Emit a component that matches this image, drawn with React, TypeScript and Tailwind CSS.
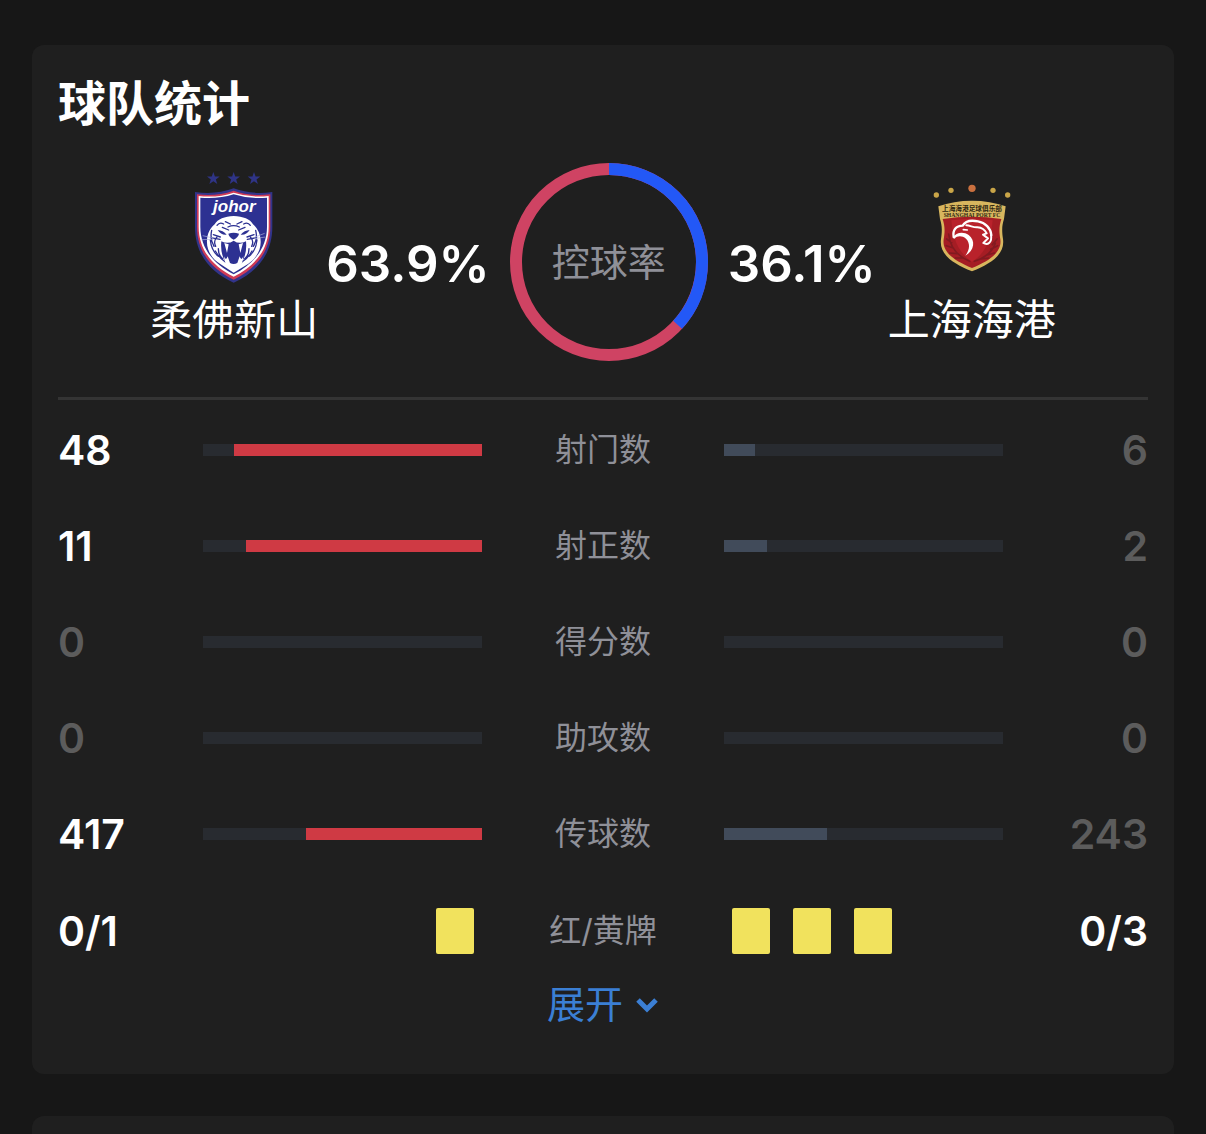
import { useState } from "react"

interface Stat {
    label: string
    home: number
    away: number
}

const stats: Stat[] = [
    { label: "射门数", home: 48, away: 6 },
    { label: "射正数", home: 11, away: 2 },
    { label: "得分数", home: 0, away: 0 },
    { label: "助攻数", home: 0, away: 0 },
    { label: "传球数", home: 417, away: 243 },
]

const possession = { home: 63.9, away: 36.1, arc: 36.8 }
const cards = { home: { red: 0, yellow: 1 }, away: { red: 0, yellow: 3 } }

const STAR = "M0-20 4.7-6.5 19-6.2 7.6 2.5 11.8 16.2 0 8-11.8 16.2-7.6 2.5-19-6.2-4.7-6.5Z"

const JohorCrest = () => (
    <svg viewBox="0 0 300 375" className="w-[100px] h-[125px]" role="img" aria-label="柔佛新山">
        <g fill="#2f3486">
            <path d={STAR} transform="translate(88 41)" />
            <path d={STAR} transform="translate(149 41)" />
            <path d={STAR} transform="translate(210 41)" />
        </g>
        {/* Shield */}
        <path d="M33 81Q95 90 149 70Q203 90 265 81V185C265 265 222 320 149 353C76 320 33 265 33 185Z" fill="#32348a" />
        <path d="M39 88Q98 95 149 77Q200 95 259 88V185C259 258 218 311 149 344C80 311 39 258 39 185Z" fill="#cf3a56" />
        <path d="M44 93Q100 99 149 83Q198 99 254 93V185C254 254 213 303 149 335C85 303 44 254 44 185Z" fill="#fff" />
        <path d="M49 98Q102 103 149 88Q196 103 249 98V185C249 249 209 297 149 328C89 297 49 249 49 185Z" fill="#2d3192" />
        <text x="151" y="142" textAnchor="middle" fill="#fff" fontSize="51" fontWeight="700" fontStyle="italic" fontFamily="Liberation Sans, sans-serif">johor</text>
        {/* Tiger */}
        <path d="M92 178C101 162 122 154 149 153C177 154 199 162 207 178C221 190 230 208 230 229C231 255 216 281 192 297L149 323L110 298C82 281 67 253 69 226C70 206 78 190 92 178Z" fill="#fff" />
        <g fill="none" stroke="#2d3192" strokeWidth="4" strokeLinecap="round">
            <path d="M99 181Q107 170 119 177M199 181Q191 170 179 177M124 170L139 177M174 170L159 177M132 186Q149 178 166 186M115 187L134 195M183 187L164 195" />
            <path d="M83 196Q77 223 90 244M79 225Q82 257 103 274M99 216Q87 228 95 244M215 196Q222 223 208 244M219 225Q216 257 195 274M199 216Q211 228 203 244" />
            <path d="M88 209L109 216M80 218L108 223M210 209L189 216M218 218L190 223M94 258Q108 281 124 291M204 258Q191 281 174 291M103 251Q103 271 116 281M195 251Q195 271 182 281" />
        </g>
        <path d="M101 195Q117 196 128 209Q111 211 101 195ZM197 195Q181 196 170 209Q187 211 197 195Z" fill="#2d3192" />
        <path d="M133 206Q149 201 165 206Q163 217 149 224Q135 217 133 206Z" fill="#2d3192" />
        <path d="M112 229Q132 239 149 227Q166 239 186 229Q190 268 171 296Q149 312 127 296Q108 268 112 229Z" fill="#2d3192" />
        <path d="M121 234L134 238L129 264ZM177 234L164 238L169 264ZM120 274Q126 290 131 274L138 294Q149 300 160 294L167 274Q172 290 178 274Q177 298 163 306H135Q121 298 120 274Z" fill="#fff" />
        <path d="M56 212L87 219M52 224L88 223M242 205L211 217M244 216L211 221" stroke="#aeb2dd" strokeWidth="2" />
    </svg>
)

const ShanghaiCrest = () => (
    <svg viewBox="0 -30 300 375" className="w-[100px] h-[125px]" role="img" aria-label="上海海港">
        <circle cx="150" cy="40" r="11" fill="#c9703f" />
        <g fill="#c9a548">
            <circle cx="87" cy="46" r="8" />
            <circle cx="213" cy="46" r="8" />
            <circle cx="43" cy="60" r="8" />
            <circle cx="257" cy="60" r="8" />
        </g>
        {/* Shield */}
        <path d="M49 94Q95 77 150 77Q205 77 251 94L246 132C240 151 239 165 243 192C249 237 211 264 150 289C89 264 51 237 57 192C61 165 60 151 54 132Z" fill="#d8b65e" />
        <path d="M62 132Q150 119 238 132C231 153 231 169 235 193C240 230 206 256 150 279C94 256 60 230 65 193C69 169 69 153 62 132Z" fill="#a51d24" />
        <path d="M88 136Q150 126 212 136C208 174 200 231 150 260C101 231 92 174 88 136Z" fill="#b9222b" />
        <g fill="none" stroke="#811a20" strokeWidth="5" strokeLinecap="round">
            <path d="M80 177Q86 235 143 259M220 205Q208 242 157 259M74 192L89 203M73 212L94 219M83 234L105 236M100 249L123 249M225 192L211 209M227 212L206 223M217 234L195 240M200 249L177 252" />
        </g>
        <text x="150" y="107" textAnchor="middle" fill="#302712" fontSize="20" fontWeight="700" fontFamily="Noto Sans CJK SC, sans-serif">上海海港足球俱乐部</text>
        <text x="150" y="125" textAnchor="middle" fill="#302712" fontSize="17" fontWeight="700" fontFamily="Liberation Serif, serif">SHANGHAI PORT FC</text>
        {/* Eagle head */}
        <g fill="none" stroke="#fff" strokeLinecap="round" strokeLinejoin="round">
            <path d="M95 186C91 166 102 152 122 152C130 137 148 135 168 139C190 143 206 160 208 180" strokeWidth="7" />
            <path d="M133 151C145 151 153 158 166 157C180 158 190 167 194 175L183 179L198 190L184 204C197 212 211 202 207 180" strokeWidth="6" />
            <path d="M124 164L136 165" strokeWidth="5" />
        </g>
        <path d="M93 188C101 172 124 168 140 180C161 196 158 226 130 242C145 222 144 203 132 191C120 181 105 182 98 191Z" fill="#fff" />
    </svg>
)

const PossessionRing = () => (
    <div className="relative w-[198px] h-[198px] shrink-0 grid place-items-center">
        <svg viewBox="0 0 198 198" className="absolute inset-0 -rotate-90" aria-hidden="true">
            <circle cx="99" cy="99" r="93" fill="none" stroke="#cf4363" strokeWidth="12" />
            <circle
                cx="99"
                cy="99"
                r="93"
                fill="none"
                stroke="#2358f6"
                strokeWidth="12"
                pathLength="100"
                strokeDasharray={`${possession.arc} 100`}
            />
        </svg>
        <span className="text-[38px] leading-12 text-[#8f9098]">控球率</span>
    </div>
)

const StatRow = ({ label, home, away }: Stat) => {
    const total = home + away
    const share = (value: number) => (total ? `${(value / total) * 100}%` : "0%")

    return (
        <li className="grid grid-cols-[145px_1fr_242px_1fr_145px] items-center h-24">
            <span className={`text-[41px] leading-12 font-semibold ${home > away ? "text-white" : "text-[#5c5c5c]"}`}>{home}</span>
            <div className="flex justify-end h-3 bg-[#282b30]">
                <div className="bg-[#cf3a44]" style={{ width: share(home) }} />
            </div>
            <span className="text-[32px] leading-12 text-center text-[#8f9098]">{label}</span>
            <div className="flex h-3 bg-[#282b30]">
                <div className="bg-[#414b5a]" style={{ width: share(away) }} />
            </div>
            <span className={`text-[41px] leading-12 font-semibold text-right ${away > home ? "text-white" : "text-[#5c5c5c]"}`}>{away}</span>
        </li>
    )
}

const YellowCards = ({ count }: { count: number }) => (
    <>
        {Array.from({ length: count }, (_, i) => (
            <span key={i} className="w-[38px] h-[46px] rounded-xs bg-[#f1e25d]" />
        ))}
    </>
)

export default function App() {
    const [expanded, setExpanded] = useState(false)

    return (
        <main className="min-h-screen flex flex-col gap-[42px] bg-[#171717] px-8 pt-[45px] font-[Inter,'Noto_Sans_CJK_SC',sans-serif]">
            <section className="rounded-xl bg-[#1f1f1f] px-[26px] pt-[31px] pb-11">
                <h2 className="text-[48px] leading-14 font-bold text-white">球队统计</h2>

                <div className="flex justify-center items-start mt-[31px]">
                    <div className="flex flex-col items-center gap-1.5 pt-0.5">
                        <JohorCrest />
                        <span className="text-[42px] leading-12 text-white">柔佛新山</span>
                    </div>
                    <span className="self-center ml-2 mr-5 pt-1 text-[51px] leading-14 font-semibold text-white">{possession.home}%</span>
                    <PossessionRing />
                    <span className="self-center ml-5 mr-3 pt-1 text-[51px] leading-14 font-semibold text-white">{possession.away}%</span>
                    <div className="flex flex-col items-center gap-1.5 pt-0.5">
                        <ShanghaiCrest />
                        <span className="text-[42px] leading-12 text-white">上海海港</span>
                    </div>
                </div>

                <hr className="mt-9 border-0 h-[3px] bg-[#343434]" />

                <ul className="pt-0.5">
                    {stats.map((stat) => (
                        <StatRow key={stat.label} {...stat} />
                    ))}
                    <li className="grid grid-cols-[145px_1fr_242px_1fr_145px] items-center h-[98px]">
                        <span className="text-[41px] leading-12 font-semibold text-white">{cards.home.red}/{cards.home.yellow}</span>
                        <div className="flex justify-end gap-[23px] px-2">
                            <YellowCards count={cards.home.yellow} />
                        </div>
                        <span className="text-[32px] leading-12 text-center text-[#8f9098]">红/黄牌</span>
                        <div className="flex gap-[23px] px-2">
                            <YellowCards count={cards.away.yellow} />
                        </div>
                        <span className="text-[41px] leading-12 font-semibold text-right text-white">{cards.away.red}/{cards.away.yellow}</span>
                    </li>
                </ul>

                <button
                    type="button"
                    aria-expanded={expanded}
                    onClick={() => setExpanded(!expanded)}
                    className="flex items-center gap-3 mx-auto mb-0.5 text-[38px] leading-12 text-[#3b7fd4] cursor-pointer"
                >
                    展开
                    <svg viewBox="0 0 24 24" className="w-6 h-6" fill="none" stroke="currentColor" strokeWidth="5" aria-hidden="true">
                        <path d="M3 8L12 17L21 8" />
                    </svg>
                </button>
            </section>

            <section className="flex-1 rounded-t-xl bg-[#1f1f1f]" />
        </main>
    )
}
